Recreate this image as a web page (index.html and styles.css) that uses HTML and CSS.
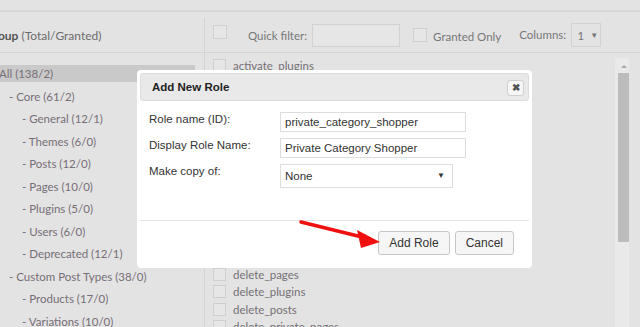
FILE: index.html
```html
<!DOCTYPE html>
<html lang="en">
<head>
  <meta charset="UTF-8">
  <title>Capabilities - Add New Role</title>
  <link rel="stylesheet" href="styles.css">
</head>
<body>

  <div class="topbar"></div>

  <div class="editor">
    <aside class="groups">
      <div class="groups-head"><strong>Group</strong> (Total/Granted)</div>
      <ul class="tree">
        <li class="active">All (138/2)</li>
        <li class="lvl1">- Core (61/2)</li>
        <li class="lvl2">- General (12/1)</li>
        <li class="lvl2">- Themes (6/0)</li>
        <li class="lvl2">- Posts (12/0)</li>
        <li class="lvl2">- Pages (10/0)</li>
        <li class="lvl2">- Plugins (5/0)</li>
        <li class="lvl2">- Users (6/0)</li>
        <li class="lvl2">- Deprecated (12/1)</li>
        <li class="lvl1">- Custom Post Types (38/0)</li>
        <li class="lvl2">- Products (17/0)</li>
        <li class="lvl2">- Variations (10/0)</li>
      </ul>
    </aside>

    <section class="caps">
      <div class="toolbar">
        <span class="box"></span>
        <label class="filter">Quick filter: <input type="text"></label>
        <span class="box"></span>
        <span class="granted">Granted Only</span>
        <span class="cols">Columns: <span class="pick">1 <i>▼</i></span></span>
      </div>

      <div class="cap-area">
        <ul class="cap-list">
          <li><span class="box"></span>activate_plugins</li>
          <li><span class="box"></span>assign_product_terms</li>
          <li><span class="box"></span>assign_shop_coupon_terms</li>
          <li><span class="box"></span>assign_shop_order_terms</li>
          <li><span class="box"></span>create_users</li>
          <li><span class="box"></span>delete_others_pages</li>
          <li><span class="box"></span>delete_others_posts</li>
          <li><span class="box"></span>delete_others_products</li>
          <li><span class="box"></span>delete_others_shop_coupons</li>
          <li><span class="box"></span>delete_others_shop_orders</li>
          <li><span class="box"></span>delete_others_shop_webhooks</li>
          <li><span class="box"></span>delete_product</li>
          <li><span class="box"></span>delete_pages</li>
          <li><span class="box"></span>delete_plugins</li>
          <li><span class="box"></span>delete_posts</li>
          <li><span class="box"></span>delete_private_pages</li>
        </ul>
        <div class="scrollbar"><span class="up"></span><span class="thumb"></span></div>
      </div>
    </section>
  </div>

  <div class="dialog">
    <div class="dialog-title">
      <span>Add New Role</span>
      <button class="close">&#10006;</button>
    </div>
    <div class="dialog-body">
      <div class="row"><label>Role name (ID):</label><input type="text" value="private_category_shopper"></div>
      <div class="row"><label>Display Role Name:</label><input type="text" value="Private Category Shopper"></div>
      <div class="row"><label>Make copy of:</label><div class="select">None <i>▼</i></div></div>
    </div>
    <div class="dialog-foot">
      <button>Add Role</button>
      <button>Cancel</button>
    </div>
  </div>

  <svg class="arrow" width="640" height="327" viewBox="0 0 640 327">
    <line x1="301" y1="222" x2="366" y2="238" stroke="#f01010" stroke-width="3.5" stroke-linecap="round"/>
    <polygon points="380,242 357,230 361,248" fill="#f01010"/>
  </svg>

</body>
</html>
```

FILE: styles.css
```css
* { margin: 0; padding: 0; box-sizing: border-box; }
body { width: 640px; height: 327px; overflow: hidden; position: relative; background: #e3e3e3; font-family: Lato, "Open Sans", sans-serif; font-size: 11.5px; color: #757075; }
ul { list-style: none; }

.topbar { height: 12px; border-bottom: 2px solid #d6d6d6; }

.editor { display: flex; margin-top: 6px; height: 309px; }

.groups { width: 225px; flex-shrink: 0; margin-left: -20px; border-right: 1px solid #d4d4d4; }
.groups-head { height: 35px; line-height: 35px; padding-left: 5px; font-size: 12px; color: #6c6c6c; border-bottom: 1px solid #d4d4d4; white-space: nowrap; }
.groups-head strong { color: #555; }

.tree { padding-top: 12px; }
.tree li { height: 17px; line-height: 17px; margin-bottom: 5.5px; color: #776e77; white-space: nowrap; }
.tree li.active { background: #c9c9c9; margin-right: 9px; padding-left: 19px; }
.tree li.lvl1 { padding-left: 29px; }
.tree li.lvl2 { padding-left: 42px; }

.caps { flex: 1; display: flex; flex-direction: column; overflow: hidden; }
.toolbar { height: 35px; flex-shrink: 0; display: flex; align-items: center; padding-left: 8px; border-bottom: 1px solid #d4d4d4; color: #777; white-space: nowrap; }
.box { display: inline-block; width: 14px; height: 14px; border: 1px solid #cfcfcf; background: #e6e6e6; flex-shrink: 0; }
.toolbar .box:first-child { margin-top: -6px; }
.filter { margin-left: 21px; display: flex; align-items: center; }
.filter input { width: 88px; height: 23px; margin-left: 5px; border: 1px solid #d2d2d2; background: #e6e6e6; }
.filter + .box { margin-left: 13px; }
.granted { margin-left: 6px; margin-top: 2px; }
.cols { margin-left: 18px; display: flex; align-items: center; margin-top: -1px; }
.pick { display: inline-block; flex: 0 0 30px; width: 30px; height: 24px; line-height: 22px; margin-left: 5px; padding-left: 5px; border: 1px solid #d2d2d2; font-size: 12px; }
.pick i, .select i { font-style: normal; font-size: 8px; vertical-align: 2px; margin-left: 3px; }

.cap-area { flex: 1; display: flex; padding-top: 5px; overflow: hidden; }
.cap-list { flex: 1; padding-left: 8px; margin-top: -1px; }
.cap-list li { height: 17.4px; display: flex; align-items: center; gap: 7px; white-space: nowrap; }
.cap-list .box { height: 13px; width: 13px; }
.scrollbar { width: 14px; margin-right: 11px; background: #e9e9e9; display: flex; flex-direction: column; align-items: flex-end; }
.scrollbar .up { width: 11px; height: 15px; position: relative; flex-shrink: 0; }
.scrollbar .up::after { content: ""; position: absolute; left: 3px; top: 4px; border: 3px solid transparent; border-bottom-color: #aaa; }
.scrollbar .thumb { width: 11px; height: 169px; flex-shrink: 0; background: #bcbcbc; }

.dialog { position: absolute; left: 137px; top: 70px; width: 395px; height: 198px; background: #fff; border-radius: 4px; padding: 3px; font-family: "Liberation Sans", Arial, sans-serif; font-size: 11.5px; color: #333; display: flex; flex-direction: column; }
.dialog-title { height: 28px; flex-shrink: 0; background: #e9e9e9; border: 1px solid #dcdcdc; border-radius: 3px; display: flex; align-items: center; justify-content: space-between; padding: 0 4px 0 11px; font-weight: bold; font-size: 11.5px; color: #222; }
.close { width: 17px; height: 16px; border: 1px solid #cfcfcf; border-radius: 3px; background: #f6f6f6; color: #555; font-size: 10px; line-height: 14px; font-weight: bold; margin-top: 1px; }

.dialog-body { padding: 11px 0 0 9px; flex: 1; border-bottom: 1px solid #e4e4e4; }
.row { display: flex; align-items: flex-start; margin-bottom: 6px; }
.row label { width: 131px; color: #333; padding-top: 1px; }
.row input { width: 186px; height: 20px; border: 1px solid #ddd; padding: 0 4px; font-family: inherit; font-size: 11.5px; color: #333; }
.select { width: 173px; height: 24px; line-height: 22px; border: 1px solid #ddd; padding: 0 4px; display: flex; justify-content: space-between; }
.select i { margin-right: 3px; }

.dialog-foot { height: 44px; flex-shrink: 0; display: flex; justify-content: flex-end; align-items: center; gap: 5px; padding-right: 15px; }
.dialog-foot button { height: 24px; padding: 0 10px; border: 1px solid #c6c6c6; border-radius: 3px; background: #f6f6f6; font-family: inherit; font-size: 12px; color: #333; white-space: nowrap; }
.dialog-foot button:first-child { min-width: 71px; }

.arrow { position: absolute; left: 0; top: 0; pointer-events: none; }
```
